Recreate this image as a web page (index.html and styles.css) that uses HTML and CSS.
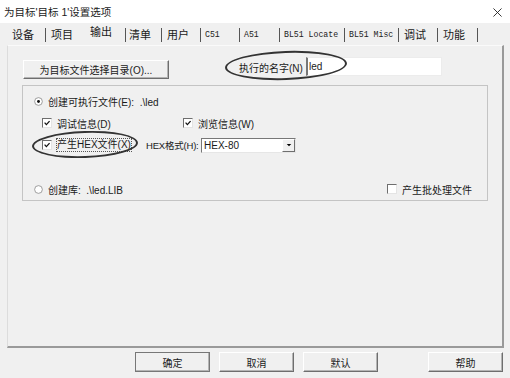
FILE: index.html
```html
<!DOCTYPE html>
<html lang="zh">
<head>
  <meta charset="UTF-8">
  <title>为目标'目标 1'设置选项</title>
  <link rel="stylesheet" href="styles.css">
</head>
<body>

  <div class="titlebar">
    <span class="title">为目标'目标 1'设置选项</span>
    <svg class="close" viewBox="0 0 10 10"><path d="M0.5 0.5 L9.5 9.5 M9.5 0.5 L0.5 9.5" stroke="#222" stroke-width="1"/></svg>
  </div>

  <div class="tabs">
    <span class="tab">设备</span>
    <span class="tab no-sep">项目</span>
    <span class="tab active">输出</span>
    <span class="tab">清单</span>
    <span class="tab">用户</span>
    <span class="tab mono">C51</span>
    <span class="tab mono">A51</span>
    <span class="tab mono">BL51 Locate</span>
    <span class="tab mono">BL51 Misc</span>
    <span class="tab">调试</span>
    <span class="tab">功能</span>
  </div>

  <div class="panel">
    <div class="target-row">
      <button class="btn btn-dir">为目标文件选择目录(O)...</button>
      <label class="name-label" for="exe-name">执行的名字(N)</label>
      <div class="textbox" id="exe-name">led</div>
    </div>

    <div class="group">
      <div class="row">
        <svg class="radio" viewBox="0 0 10 10"><circle cx="5" cy="5" r="4.3" fill="#fff" stroke="#8a8a8a" stroke-width="0.9"/><circle cx="5" cy="5" r="1.6" fill="#111"/></svg>
        <span>创建可执行文件(E):&nbsp; .\led</span>
      </div>
      <div class="row indent">
        <div class="check check-debug">
          <span class="cb"><svg viewBox="0 0 10 10"><path d="M2 4.6 L4.2 7 L8.2 2.6" stroke="#111" stroke-width="1.6" fill="none"/></svg></span>
          <span class="cb-text">调试信息(D)</span>
        </div>
        <div class="check">
          <span class="cb"><svg viewBox="0 0 10 10"><path d="M2 4.6 L4.2 7 L8.2 2.6" stroke="#111" stroke-width="1.6" fill="none"/></svg></span>
          <span class="cb-text">浏览信息(W)</span>
        </div>
      </div>
      <div class="row indent hex-row">
        <div class="check check-hex">
          <span class="cb"><svg viewBox="0 0 10 10"><path d="M2 4.6 L4.2 7 L8.2 2.6" stroke="#111" stroke-width="1.6" fill="none"/></svg></span>
          <span class="cb-text focus">产生HEX文件(X)</span>
        </div>
        <span class="hex-label">HEX格式(H):</span>
        <div class="select">
          <span>HEX-80</span>
          <span class="drop"><svg viewBox="0 0 8 5"><path d="M1 1 L7 1 L4 4 Z" fill="#000"/></svg></span>
        </div>
      </div>
      <div class="row last-row">
        <svg class="radio" viewBox="0 0 10 10"><circle cx="5" cy="5" r="4.3" fill="#fff" stroke="#8a8a8a" stroke-width="0.9"/></svg>
        <span>创建库:&nbsp; .\led.LIB</span>
        <div class="check check-batch">
          <span class="cb"></span>
          <span class="cb-text">产生批处理文件</span>
        </div>
      </div>
    </div>

    <!-- hand-drawn annotation rings -->
    <span class="mark mark-name"></span>
    <span class="mark mark-hex"></span>
  </div>

  <div class="footer">
    <button class="btn btn-foot default">确定</button>
    <button class="btn btn-foot">取消</button>
    <button class="btn btn-foot">默认</button>
    <button class="btn btn-foot help">帮助</button>
  </div>

</body>
</html>
```

FILE: styles.css
```css
body {
  margin: 0;
  width: 510px;
  height: 378px;
  overflow: hidden;
  background: #f0f0f0;
  font-family: "Liberation Sans", "Noto Sans CJK SC", sans-serif;
  font-size: 10px;
  color: #1a1a1a;
  white-space: nowrap;
}
.titlebar {
  height: 23px;
  background: #fff;
  display: flex;
  align-items: center;
  padding: 0 8px 0 4px;
}
.title {
  flex: 1;
  font-size: 10.5px;
}
.close {
  width: 9px;
  height: 9px;
  margin-top: 2px;
}
.tabs {
  display: grid;
  grid-template-columns: 39px 39px 40px 37px 39px 39px 40px 65px 54px 39px 40px;
  margin: 0 0 0 7px;
  height: 22px;
  align-items: end;
}
.tab {
  height: 14px;
  line-height: 14px;
  padding-left: 5px;
  border-right: 1px solid #555;
  margin-bottom: 3px;
  font-size: 11px;
  overflow: hidden;
}
.tab.no-sep {
  border-right: none;
}
.tab.active {
  margin-bottom: 6px;
  border-right: none;
}
.tab.active + .tab {
  border-left: 1px solid #555;
  padding-left: 3px;
}
.mono {
  font-family: "Liberation Mono", "DejaVu Sans Mono", monospace;
  font-size: 8.2px;
  color: #222;
  padding-left: 4px;
}
.panel {
  position: relative;
  box-sizing: border-box;
  margin-left: 7px;
  width: 497px;
  height: 303px;
  border-top: 1px solid #fafafa;
  border-left: 1px solid #dcdcdc;
  border-right: 2px solid #999;
  border-bottom: 2px solid #9a9a9a;
  padding: 12px 0 0 15px;
}
.target-row {
  display: flex;
  align-items: center;
  height: 20px;
}
.btn {
  font-family: inherit;
  font-size: 10px;
  color: #1a1a1a;
  background: #f0f0f0;
  border: 1px solid;
  border-color: #fff #6e6e6e #6e6e6e #fff;
  box-shadow: inset -1px -1px #b4b4b4;
  padding: 0;
}
.btn-dir {
  width: 146px;
  height: 19px;
  margin-top: 2px;
}
.name-label {
  margin-left: 70px;
  width: 67px;
  margin-top: -2px;
}
.textbox {
  width: 132px;
  height: 17px;
  line-height: 17px;
  background: #fff;
  border: 1px solid #ececec;
  border-left: 2px solid #777;
  padding-left: 1px;
  margin-top: -4px;
}
.group {
  display: flex;
  flex-direction: column;
  box-sizing: border-box;
  width: 466px;
  height: 116px;
  margin: 7px 0 0 -1px;
  border: 1px solid #c4c4c4;
  padding: 7px 0 3px 11px;
}
.row {
  display: flex;
  align-items: center;
  height: 16px;
}
.row.indent {
  padding-left: 8px;
  margin-top: 6px;
}
.row.hex-row {
  height: 18px;
  margin-top: 5px;
}
.row.last-row {
  margin-top: auto;
}
.radio {
  width: 9px;
  height: 9px;
  margin-right: 5px;
}
.check {
  display: flex;
  align-items: center;
}
.check-debug {
  width: 141px;
}
.check-hex {
  width: 104px;
}
.check-batch {
  margin-left: auto;
  margin-right: 15px;
}
.cb {
  box-sizing: border-box;
  width: 10px;
  height: 10px;
  background: #fff;
  border: 1px solid;
  border-color: #6e6e6e #e4e4e4 #e4e4e4 #6e6e6e;
  display: flex;
}
.cb svg {
  width: 8px;
  height: 8px;
}
.cb-text {
  margin-left: 5px;
}
.focus {
  outline: 1px dotted #555;
  line-height: 12px;
}
.hex-label {
  width: 55px;
  font-size: 9.5px;
  letter-spacing: -0.2px;
}
.select {
  display: flex;
  align-items: center;
  justify-content: space-between;
  box-sizing: border-box;
  width: 95px;
  height: 15px;
  background: #fff;
  border: 1px solid;
  border-color: #777 #e6e6e6 #e6e6e6 #777;
  padding-left: 2px;
}
.drop {
  box-sizing: border-box;
  width: 13px;
  height: 13px;
  background: #f0f0f0;
  border: 1px solid;
  border-color: #fff #6e6e6e #6e6e6e #fff;
  display: flex;
  align-items: center;
  justify-content: center;
}
.drop svg {
  width: 6px;
  height: 4px;
}
.mark {
  position: absolute;
  border: 2.5px solid #333;
  border-radius: 50%;
}
.mark-name {
  left: 217px;
  top: 5px;
  width: 118px;
  height: 25px;
  transform: rotate(-2deg);
}
.mark-hex {
  left: 24px;
  top: 85px;
  width: 102px;
  height: 23px;
  transform: rotate(-2deg);
}
.footer {
  display: flex;
  gap: 9px;
  padding: 4px 7px 0 135px;
}
.btn-foot {
  width: 75px;
  height: 20px;
}
.btn-foot.default {
  border-color: #fff #555 #555 #fff;
  outline: 1px solid #777;
  outline-offset: -1px;
}
.btn-foot.help {
  margin-left: auto;
}
```
